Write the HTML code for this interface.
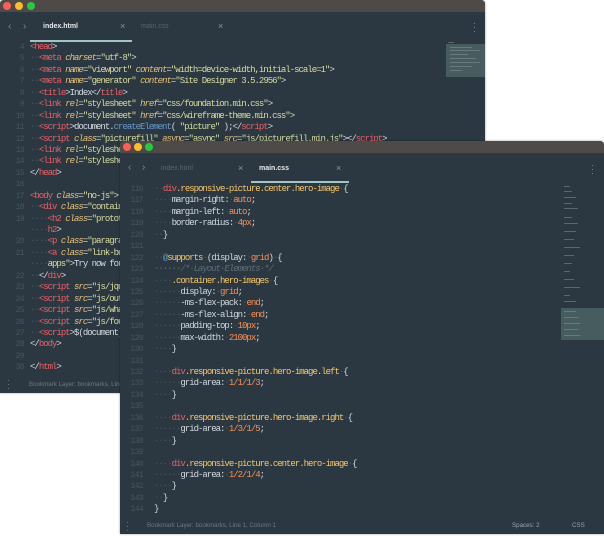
<!DOCTYPE html>
<html><head><meta charset="utf-8"><style>
*{margin:0;padding:0;box-sizing:border-box}
body{width:604px;height:536px;background:#fff;position:relative;overflow:hidden;font-family:"Liberation Sans",sans-serif}
.win{position:absolute;background:#2b3841;overflow:hidden;border-radius:4px 4px 0 0;box-shadow:0 0 2px rgba(0,0,0,.4)}
.tb{position:absolute;left:0;top:0;right:0;height:12px;background:#4d4a48}
.dot{position:absolute;top:2px;width:8px;height:8px;border-radius:50%}
.r{background:#fd5e57}.y{background:#fdbc2e}.g{background:#28c840}
.code{position:absolute;font-family:"Liberation Mono",monospace;font-size:9px;letter-spacing:-1px;line-height:11.43px;color:#d3d9e2;white-space:pre}
.ln{position:absolute;font-family:"Liberation Mono",monospace;font-size:8px;letter-spacing:-0.6px;line-height:11.43px;color:#46555e;text-align:right;white-space:pre}
.t{color:#ec5f67}.a{color:#e6c07b;font-style:italic}.s{color:#d8dca0}.d{color:#4a5862}.p{color:#f9c86d}.v{color:#f99157}.c{color:#5f6e78;font-style:italic}.b{color:#6699cc}
.tab{position:absolute;font-size:7px;color:#56666f}
.tab.on{color:#e8ecef;font-weight:bold}
.x{position:absolute;font-size:9px;color:#8a969d}
.nav{position:absolute;font-size:10px;color:#7d8a91}
.ul{position:absolute;height:2px;background:#9fc6c4}
.st{position:absolute;font-size:6.2px;color:#6c7a82}
.mm{position:absolute;background:#4b6364;opacity:.85}
.ml{position:absolute;height:1px;background:#8a989c;opacity:.5}
</style></head><body>

<div class="win" style="left:0;top:0;width:485px;height:393px">
<div class="tb"></div>
<div class="dot r" style="left:3px"></div><div class="dot y" style="left:15px"></div><div class="dot g" style="left:27px"></div>
<div class="nav" style="left:8px;top:21px">&lsaquo;</div><div class="nav" style="left:23px;top:21px">&rsaquo;</div>
<div class="tab on" style="left:43px;top:23px">index.html</div><div class="x" style="left:120px;top:21px">×</div>
<div class="tab" style="left:141px;top:23px">main.css</div><div class="x" style="left:218px;top:21px">×</div>
<div class="ul" style="left:30px;top:40px;width:102px"></div>
<div class="st" style="left:473px;top:22px;color:#9aa5ab;font-size:8px;line-height:4px">·<br>·<br>·</div>
<div class="mm" style="left:446px;top:44px;width:39px;height:33px"></div>
<div class="ml" style="left:448px;top:42px;width:6px"></div><div class="ml" style="left:450px;top:47px;width:22px"></div><div class="ml" style="left:450px;top:50px;width:30px"></div><div class="ml" style="left:450px;top:54px;width:18px"></div><div class="ml" style="left:450px;top:58px;width:26px"></div><div class="ml" style="left:450px;top:62px;width:30px"></div><div class="ml" style="left:450px;top:66px;width:22px"></div><div class="ml" style="left:450px;top:70px;width:12px"></div>
<div class="ln" style="left:4px;top:42px;width:20px">4
5
6
7
8
9
10
11
12
13
14
15
16
17
18
19

20
21

22
23
24
25
26
27
28
29
30</div>
<div class="code" style="left:30px;top:42px"><span class="t">&lt;head</span>&gt;
<span class="d">··</span><span class="t">&lt;meta</span> <span class="a">charset</span>=<span class="s">"utf-8"</span>&gt;
<span class="d">··</span><span class="t">&lt;meta</span> <span class="a">name</span>=<span class="s">"viewport"</span> <span class="a">content</span>=<span class="s">"width=device-width,initial-scale=1"</span>&gt;
<span class="d">··</span><span class="t">&lt;meta</span> <span class="a">name</span>=<span class="s">"generator"</span> <span class="a">content</span>=<span class="s">"Site Designer 3.5.2956"</span>&gt;
<span class="d">··</span><span class="t">&lt;title</span>&gt;Index&lt;/<span class="t">title</span>&gt;
<span class="d">··</span><span class="t">&lt;link</span> <span class="a">rel</span>=<span class="s">"stylesheet"</span> <span class="a">href</span>=<span class="s">"css/foundation.min.css"</span>&gt;
<span class="d">··</span><span class="t">&lt;link</span> <span class="a">rel</span>=<span class="s">"stylesheet"</span> <span class="a">href</span>=<span class="s">"css/wireframe-theme.min.css"</span>&gt;
<span class="d">··</span><span class="t">&lt;script</span>&gt;document.<span class="b">createElement</span>( <span class="s">"picture"</span> );&lt;/<span class="t">script</span>&gt;
<span class="d">··</span><span class="t">&lt;script</span> <span class="a">class</span>=<span class="s">"picturefill"</span> <span class="a">async</span>=<span class="s">"async"</span> <span class="a">src</span>=<span class="s">"js/picturefill.min.js"</span>&gt;&lt;/<span class="t">script</span>&gt;
<span class="d">··</span><span class="t">&lt;link</span> <span class="a">rel</span>=<span class="s">"stylesheet"</span>
<span class="d">··</span><span class="t">&lt;link</span> <span class="a">rel</span>=<span class="s">"stylesheet"</span>
&lt;/<span class="t">head</span>&gt;

<span class="t">&lt;body</span> <span class="a">class</span>=<span class="s">"no-js"</span>&gt;
<span class="d">··</span><span class="t">&lt;div</span> <span class="a">class</span>=<span class="s">"container</span>
<span class="d">····</span><span class="t">&lt;h2</span> <span class="a">class</span>=<span class="s">"prototype</span>
<span class="d">····</span><span class="t">h2</span>&gt;
<span class="d">····</span><span class="t">&lt;p</span> <span class="a">class</span>=<span class="s">"paragraph</span>
<span class="d">····</span><span class="t">&lt;a</span> <span class="a">class</span>=<span class="s">"link-button</span>
<span class="d">····</span><span class="s">apps"</span>&gt;Try now for
<span class="d">··</span>&lt;/<span class="t">div</span>&gt;
<span class="d">··</span><span class="t">&lt;script</span> <span class="a">src</span>=<span class="s">"js/jquery</span>
<span class="d">··</span><span class="t">&lt;script</span> <span class="a">src</span>=<span class="s">"js/outof</span>
<span class="d">··</span><span class="t">&lt;script</span> <span class="a">src</span>=<span class="s">"js/what</span>
<span class="d">··</span><span class="t">&lt;script</span> <span class="a">src</span>=<span class="s">"js/found</span>
<span class="d">··</span><span class="t">&lt;script</span>&gt;$(document)
&lt;/<span class="t">body</span>&gt;

&lt;/<span class="t">html</span>&gt;</div>
<div class="st" style="left:7px;top:378px;font-size:9px;line-height:4px">·<br>·<br>·</div>
<div class="st" style="left:29px;top:381px">Bookmark Layer: bookmarks, Line 1, Column 1</div>
</div>

<div class="win" style="left:120px;top:141px;width:484px;height:393px">
<div class="tb"></div>
<div class="dot r" style="left:3px"></div><div class="dot y" style="left:14px"></div><div class="dot g" style="left:25px"></div>
<div class="nav" style="left:8px;top:21px">&lsaquo;</div><div class="nav" style="left:22px;top:21px">&rsaquo;</div>
<div class="tab" style="left:41px;top:24px">index.html</div><div class="x" style="left:118px;top:22px">×</div>
<div class="tab on" style="left:139px;top:24px">main.css</div><div class="x" style="left:216px;top:22px">×</div>
<div class="ul" style="left:131px;top:40px;width:98px"></div>
<div class="st" style="left:471px;top:23px;color:#9aa5ab;font-size:8px;line-height:4px">·<br>·<br>·</div>
<div class="ml" style="left:444px;top:45px;width:6px"></div><div class="ml" style="left:444px;top:50px;width:8px"></div><div class="ml" style="left:444px;top:56px;width:12px"></div><div class="ml" style="left:444px;top:62px;width:8px"></div><div class="ml" style="left:444px;top:67px;width:14px"></div><div class="ml" style="left:444px;top:76px;width:8px"></div><div class="ml" style="left:444px;top:82px;width:14px"></div><div class="ml" style="left:444px;top:90px;width:12px"></div><div class="ml" style="left:444px;top:98px;width:10px"></div><div class="ml" style="left:444px;top:106px;width:16px"></div><div class="ml" style="left:444px;top:114px;width:10px"></div><div class="ml" style="left:444px;top:122px;width:8px"></div><div class="ml" style="left:444px;top:130px;width:6px"></div><div class="ml" style="left:444px;top:138px;width:10px"></div><div class="ml" style="left:444px;top:146px;width:16px"></div><div class="ml" style="left:444px;top:154px;width:6px"></div><div class="ml" style="left:444px;top:160px;width:12px"></div>
<div class="mm" style="left:441px;top:167px;width:43px;height:32px"></div>
<div class="ml" style="left:444px;top:170px;width:12px"></div><div class="ml" style="left:444px;top:176px;width:14px"></div><div class="ml" style="left:444px;top:182px;width:16px"></div><div class="ml" style="left:444px;top:188px;width:14px"></div><div class="ml" style="left:444px;top:194px;width:16px"></div>
<div class="ln" style="left:2px;top:43px;width:21px">116
117
118
119
120
121
122
123
124
125
126
127
128
129
130
131
132
133
134
135
136
137
138
139
140
141
142
143
144</div>
<div class="code" style="left:34px;top:43px"><span class="d">··</span><span class="t">div</span><span class="p">.responsive-picture.center.hero-image</span><span class="d">·</span>{
<span class="d">····</span>margin-right:<span class="d">·</span><span class="v">auto</span>;
<span class="d">····</span>margin-left:<span class="d">·</span><span class="v">auto</span>;
<span class="d">····</span>border-radius:<span class="d">·</span><span class="v">4px</span>;
<span class="d">··</span>}

<span class="d">··</span><span class="b">@</span><span class="p">supports</span><span class="d">·</span>(display:<span class="d">·</span><span class="v">grid</span>)<span class="d">·</span>{
<span class="c">······/*·Layout·Elements·*/</span>
<span class="d">····</span><span class="p">.container.hero-images</span><span class="d">·</span>{
<span class="d">······</span>display:<span class="d">·</span><span class="v">grid</span>;
<span class="d">······</span>-ms-flex-pack:<span class="d">·</span><span class="v">end</span>;
<span class="d">······</span>-ms-flex-align:<span class="d">·</span><span class="v">end</span>;
<span class="d">······</span>padding-top:<span class="d">·</span><span class="v">10px</span>;
<span class="d">······</span>max-width:<span class="d">·</span><span class="v">2100px</span>;
<span class="d">····</span>}

<span class="d">····</span><span class="t">div</span><span class="p">.responsive-picture.hero-image.left</span><span class="d">·</span>{
<span class="d">······</span>grid-area:<span class="d">·</span><span class="v">1/1/1/3</span>;
<span class="d">····</span>}

<span class="d">····</span><span class="t">div</span><span class="p">.responsive-picture.hero-image.right</span><span class="d">·</span>{
<span class="d">······</span>grid-area:<span class="d">·</span><span class="v">1/3/1/5</span>;
<span class="d">····</span>}

<span class="d">····</span><span class="t">div</span><span class="p">.responsive-picture.center.hero-image</span><span class="d">·</span>{
<span class="d">······</span>grid-area:<span class="d">·</span><span class="v">1/2/1/4</span>;
<span class="d">····</span>}
<span class="d">··</span>}
}</div>
<div class="st" style="left:6px;top:379px;font-size:9px;line-height:4px">·<br>·<br>·</div>
<div class="st" style="left:27px;top:381px">Bookmark Layer: bookmarks, Line 1, Column 1</div>
<div class="st" style="left:392px;top:381px;color:#9aa5ab">Spaces: 2</div>
<div class="st" style="left:452px;top:381px;color:#9aa5ab">CSS</div>
</div>
</body></html>
